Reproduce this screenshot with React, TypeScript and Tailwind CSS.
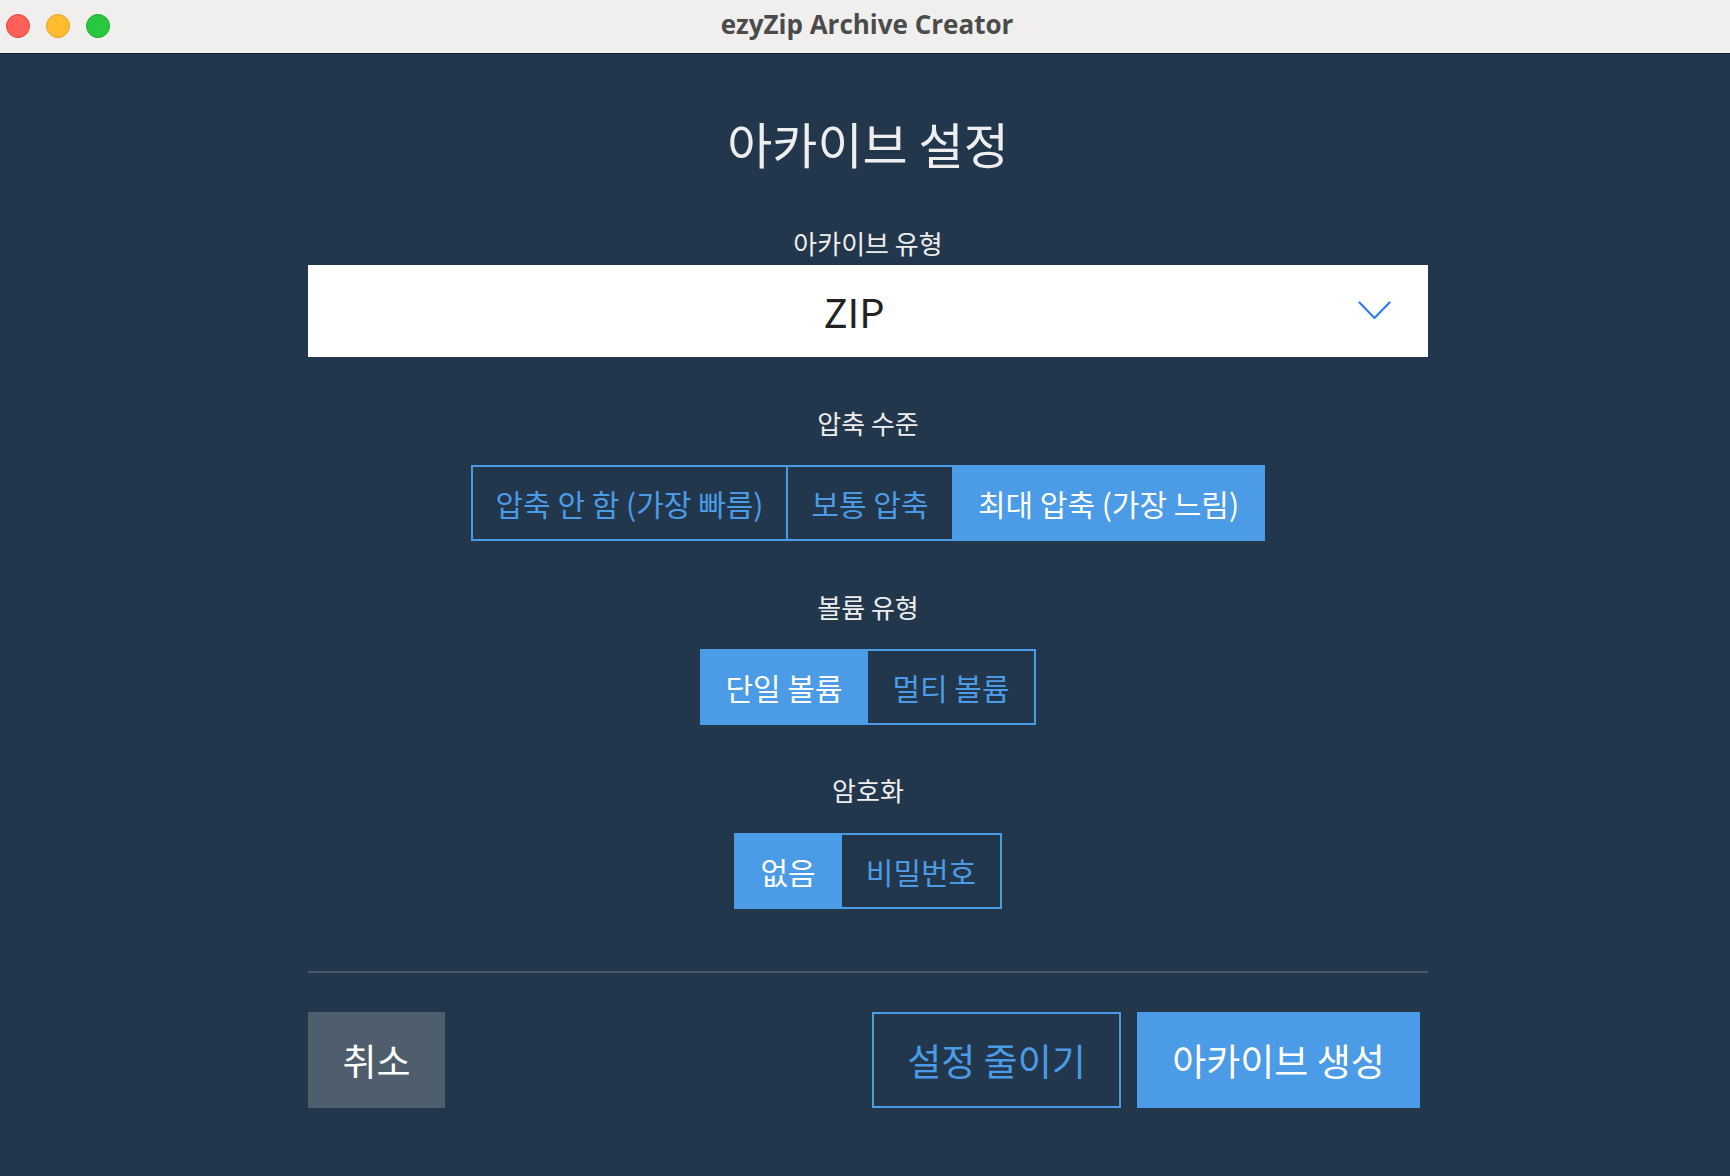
import React from "react";

const KR = { fontFamily: '"Noto Sans CJK KR", "Noto Sans", sans-serif' };

function Seg({
  items,
  widths,
  active,
}: {
  items: string[];
  widths: string[];
  active: number;
}) {
  return (
    <div className="flex justify-center">
      {items.map((t, i) => (
        <div
          key={t}
          className={
            "flex h-[76px] items-center justify-center whitespace-nowrap border-2 border-[#4b9be6] text-[30px] leading-none " +
            widths[i] +
            (i > 0 ? " -ml-[2px]" : "") +
            (i === active ? " bg-[#4b9be6] text-white" : " text-[#4b9be6]")
          }
        >
          {t}
        </div>
      ))}
    </div>
  );
}

export default function App() {
  return (
    <div className="flex min-h-[1176px] w-full flex-col bg-[#22374c]" style={KR}>
      {/* Title bar */}
      <div className="relative flex h-[54px] shrink-0 items-center justify-center border-b border-[#111b26] bg-[#f0efed]">
        <div className="absolute left-[6px] top-[14px] flex gap-[16px]">
          <div className="h-[24px] w-[24px] rounded-full border border-[#e2463f] bg-[#fe5f57]" />
          <div className="h-[24px] w-[24px] rounded-full border border-[#e1a325] bg-[#febc2e]" />
          <div className="h-[24px] w-[24px] rounded-full border border-[#1aab29] bg-[#28c840]" />
        </div>
        <div
          className="pb-[6px] pl-[4px] text-[26px] font-bold leading-[32px] text-[#4b4b4b]"
          style={{ fontFamily: '"Open Sans", Inter, "Liberation Sans", sans-serif' }}
        >
          ezyZip Archive Creator
        </div>
      </div>

      {/* Content */}
      <div className="flex justify-center pl-[6px]">
        <div className="flex w-[1120px] flex-col">
          <div className="mt-[59px] h-[60px] text-center text-[49px] leading-[60px] text-[#eeeeee]">
            아카이브 설정
          </div>

          <div className="mt-[55px] h-[30px] text-center text-[26px] leading-[30px] text-[#eeeeee]">
            아카이브 유형
          </div>
          <div className="relative mt-[7px] flex h-[92px] items-center justify-center bg-white pr-[28px]">
            <span className="text-[40px] leading-none text-[#222222]">ZIP</span>
            <svg
              className="absolute right-[37px] top-[36px]"
              width="33"
              height="19"
              viewBox="0 0 33 19"
              fill="none"
            >
              <polyline
                points="1.5,1.5 16.5,17 31.5,1.5"
                stroke="#2f7cf5"
                strokeWidth="2.2"
                strokeLinecap="round"
                strokeLinejoin="round"
              />
            </svg>
          </div>

          <div className="mt-[51px] h-[30px] text-center text-[26px] leading-[30px] text-[#eeeeee]">
            압축 수준
          </div>
          <div className="mt-[27px]">
            <Seg
              items={["압축 안 함 (가장 빠름)", "보통 압축", "최대 압축 (가장 느림)"]}
              widths={["w-[317px]", "w-[168px]", "w-[313px]"]}
              active={2}
            />
          </div>

          <div className="mt-[51px] h-[30px] text-center text-[26px] leading-[30px] text-[#eeeeee]">
            볼륨 유형
          </div>
          <div className="mt-[27px]">
            <Seg items={["단일 볼륨", "멀티 볼륨"]} widths={["w-[168px]", "w-[170px]"]} active={0} />
          </div>

          <div className="mt-[50px] h-[30px] text-center text-[26px] leading-[30px] text-[#eeeeee]">
            암호화
          </div>
          <div className="mt-[28px]">
            <Seg items={["없음", "비밀번호"]} widths={["w-[108px]", "w-[162px]"]} active={0} />
          </div>

          <div className="mt-[62px] h-[2px] bg-[#47586a]" />

          <div className="mt-[39px] flex items-center justify-between pr-[8px]">
            <div className="flex h-[96px] w-[137px] items-center justify-center bg-[#4f5e6d] text-[37px] leading-none text-white">
              취소
            </div>
            <div className="flex gap-[16px]">
              <div className="flex h-[96px] w-[249px] items-center justify-center border-2 border-[#4b9be6] text-[37px] leading-none text-[#4b9be6]">
                설정 줄이기
              </div>
              <div className="flex h-[96px] w-[283px] items-center justify-center bg-[#4b9be6] text-[37px] leading-none text-white">
                아카이브 생성
              </div>
            </div>
          </div>
        </div>
      </div>
    </div>
  );
}
